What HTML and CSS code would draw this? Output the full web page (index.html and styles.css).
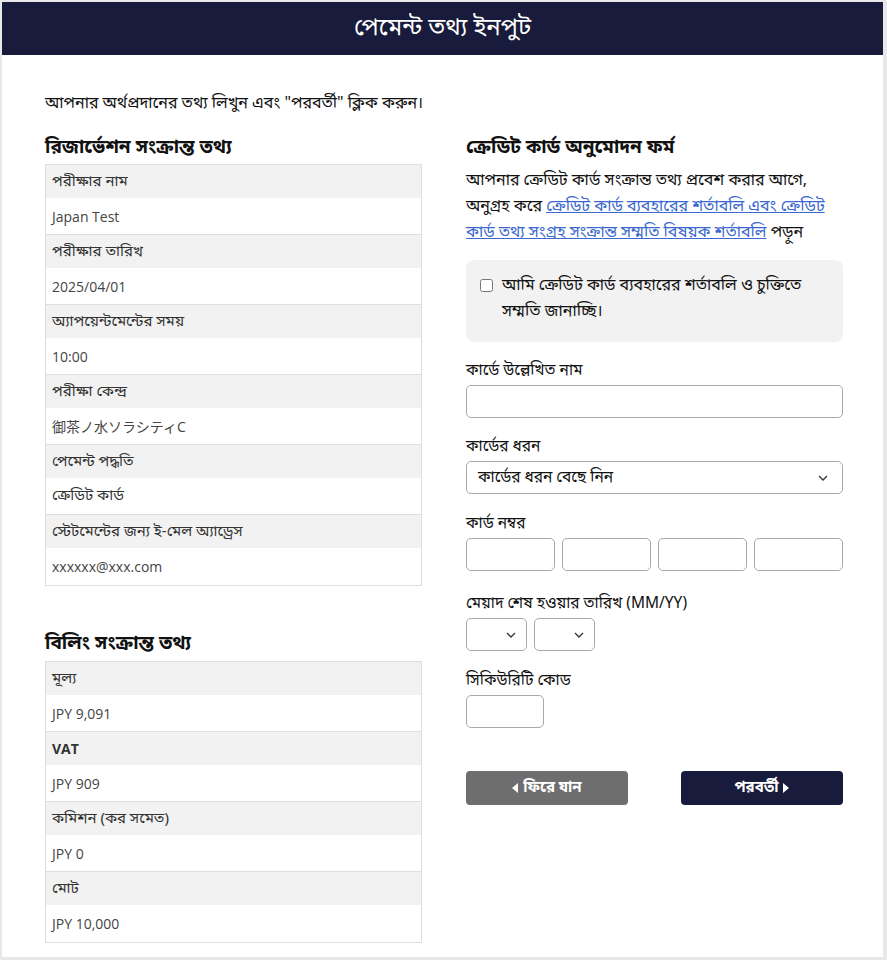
FILE: index.html
```html
<!DOCTYPE html>
<html lang="bn">
<head>
<meta charset="utf-8">
<title>পেমেন্ট তথ্য ইনপুট</title>
<link rel="stylesheet" href="styles.css">
</head>
<body>
<div class="page">
  <header class="header">পেমেন্ট তথ্য ইনপুট</header>
  <main class="content">
    <p class="intro">আপনার অর্থপ্রদানের তথ্য লিখুন এবং "পরবর্তী" ক্লিক করুন।</p>
    <div class="columns">
      <section class="left">
        <h2 class="heading">রিজার্ভেশন সংক্রান্ত তথ্য</h2>
        <div class="table">
          <div class="row label">পরীক্ষার নাম</div>
          <div class="row value">Japan Test</div>
          <div class="row label">পরীক্ষার তারিখ</div>
          <div class="row value">2025/04/01</div>
          <div class="row label">অ্যাপয়েন্টমেন্টের সময়</div>
          <div class="row value">10:00</div>
          <div class="row label">পরীক্ষা কেন্দ্র</div>
          <div class="row value">御茶ノ水ソラシティC</div>
          <div class="row label">পেমেন্ট পদ্ধতি</div>
          <div class="row value bn">ক্রেডিট কার্ড</div>
          <div class="row label">স্টেটমেন্টের জন্য ই-মেল অ্যাড্রেস</div>
          <div class="row value">xxxxxx@xxx.com</div>
        </div>
        <h2 class="heading billing">বিলিং সংক্রান্ত তথ্য</h2>
        <div class="table">
          <div class="row label">মূল্য</div>
          <div class="row value">JPY 9,091</div>
          <div class="row label"><b class="vat">VAT</b></div>
          <div class="row value">JPY 909</div>
          <div class="row label">কমিশন (কর সমেত)</div>
          <div class="row value">JPY 0</div>
          <div class="row label">মোট</div>
          <div class="row value">JPY 10,000</div>
        </div>
      </section>
      <section class="right">
        <h2 class="heading">ক্রেডিট কার্ড অনুমোদন ফর্ম</h2>
        <p class="terms">আপনার ক্রেডিট কার্ড সংক্রান্ত তথ্য প্রবেশ করার আগে, অনুগ্রহ করে <a href="#" class="link">ক্রেডিট কার্ড ব্যবহারের শর্তাবলি এবং ক্রেডিট কার্ড তথ্য সংগ্রহ সংক্রান্ত সম্মতি বিষয়ক শর্তাবলি</a> পড়ুন</p>
        <label class="agree">
          <input type="checkbox" class="check">
          <span>আমি ক্রেডিট কার্ড ব্যবহারের শর্তাবলি ও চুক্তিতে সম্মতি জানাচ্ছি।</span>
        </label>
        <div class="field">
          <div class="flabel">কার্ডে উল্লেখিত নাম</div>
          <input type="text" class="input full">
        </div>
        <div class="field">
          <div class="flabel">কার্ডের ধরন</div>
          <div class="select full">
            <span>কার্ডের ধরন বেছে নিন</span>
            <svg class="chev" width="10" height="6" viewBox="0 0 10 6"><path d="M1 1l4 4 4-4" fill="none" stroke="#333" stroke-width="1.3"/></svg>
          </div>
        </div>
        <div class="field f-card">
          <div class="flabel">কার্ড নম্বর</div>
          <div class="cardnum">
            <input type="text" class="input">
            <input type="text" class="input">
            <input type="text" class="input">
            <input type="text" class="input">
          </div>
        </div>
        <div class="field f-exp">
          <div class="flabel">মেয়াদ শেষ হওয়ার তারিখ (MM/YY)</div>
          <div class="expiry">
            <div class="select small"><span></span><svg class="chev" width="10" height="6" viewBox="0 0 10 6"><path d="M1 1l4 4 4-4" fill="none" stroke="#333" stroke-width="1.3"/></svg></div>
            <div class="select small"><span></span><svg class="chev" width="10" height="6" viewBox="0 0 10 6"><path d="M1 1l4 4 4-4" fill="none" stroke="#333" stroke-width="1.3"/></svg></div>
          </div>
        </div>
        <div class="field f-cvv">
          <div class="flabel">সিকিউরিটি কোড</div>
          <input type="text" class="input cvv">
        </div>
        <div class="buttons">
          <button class="btn back"><svg width="6" height="10" viewBox="0 0 6 10"><path d="M6 0L0 5l6 5z" fill="#fff"/></svg>ফিরে যান</button>
          <button class="btn next">পরবর্তী<svg width="6" height="10" viewBox="0 0 6 10"><path d="M0 0l6 5-6 5z" fill="#fff"/></svg></button>
        </div>
      </section>
    </div>
  </main>
</div>
</body>
</html>
```

FILE: styles.css
```css
* { box-sizing: border-box; }
html, body { margin: 0; }
body {
  background: #e8e8e8;
  padding: 2px 4px 3px 2px;
  font-family: "Noto Sans Bengali", "Noto Sans", "Open Sans", "Noto Sans CJK JP", sans-serif;
  color: #111;
}
.page {
  background: #fff;
  min-height: 955px;
}
.header {
  background: #181b3b;
  color: #fff;
  height: 53px;
  display: flex;
  align-items: center;
  justify-content: center;
  font-size: 24px;
}
.content {
  margin: 0 40px 0 43px;
  padding-top: 38px;
}
.intro {
  margin: 0 0 21px;
  font-size: 16px;
  line-height: 22px;
}
.columns {
  display: grid;
  grid-template-columns: 377px 377px;
  column-gap: 44px;
}
.heading {
  margin: 0 0 2px;
  font-size: 19px;
  line-height: 26px;
  font-weight: 700;
}
.heading.billing { margin: 46px 0 3px; }
.table {
  border: 1px solid #dedede;
}
.row {
  display: flex;
  align-items: center;
  padding: 0 6px;
  font-size: 15px;
  color: #333;
}
.row.label {
  height: 33px;
  background: #f2f2f2;
}
.row.value {
  height: 37px;
  background: #fff;
  border-bottom: 1px solid #dedede;
  font-family: "Open Sans", "Noto Sans CJK JP", sans-serif;
  font-size: 14px;
  color: #444;
}
.row.value.bn {
  font-family: "Noto Sans Bengali", sans-serif;
  font-size: 15px;
  color: #333;
}
.row.value:last-child { border-bottom: 0; }
.vat { font-family: "Open Sans", sans-serif; font-size: 14px; }
.terms {
  margin: 6px 0 14px;
  font-size: 16px;
  line-height: 26px;
}
.link { color: #3a67d0; text-decoration: underline; }
.agree {
  display: flex;
  align-items: flex-start;
  gap: 9px;
  background: #f2f2f2;
  border-radius: 8px;
  padding: 13px 16px 17px 14px;
  font-size: 16px;
  line-height: 26px;
}
.check {
  margin: 6px 0 0;
  width: 13px;
  height: 13px;
  flex: none;
}
.field { margin-top: 19px; }
.field.f-card { margin-top: 20px; }
.field.f-exp { margin-top: 23px; }
.field.f-cvv { margin-top: 20px; }
.flabel {
  font-size: 15.5px;
  line-height: 20px;
  margin-bottom: 4px;
}
.input {
  display: block;
  height: 33px;
  border: 1px solid #a9a9a9;
  border-radius: 5px;
  background: #fff;
  font: inherit;
}
.input.full { width: 100%; }
.select {
  height: 33px;
  border: 1px solid #a9a9a9;
  border-radius: 5px;
  background: #fff;
  display: flex;
  align-items: center;
  justify-content: space-between;
  padding: 0 14px 0 11px;
  font-size: 15.5px;
}
.select.small { width: 61px; padding-right: 10px; }
.chev { flex: none; }
.cardnum {
  display: grid;
  grid-template-columns: repeat(4, 1fr);
  gap: 7px;
}
.cardnum .input { width: 100%; }
.expiry { display: flex; gap: 7px; }
.cvv { width: 78px; }
.buttons {
  display: flex;
  justify-content: space-between;
  margin-top: 43px;
}
.btn {
  width: 162px;
  height: 34px;
  border: 0;
  border-radius: 4px;
  color: #fff;
  font: inherit;
  font-size: 15px;
  font-weight: 700;
  display: flex;
  align-items: center;
  justify-content: center;
  gap: 5px;
}
.btn.back { background: #6e6e6e; }
.btn.next { background: #181b3b; }
```
